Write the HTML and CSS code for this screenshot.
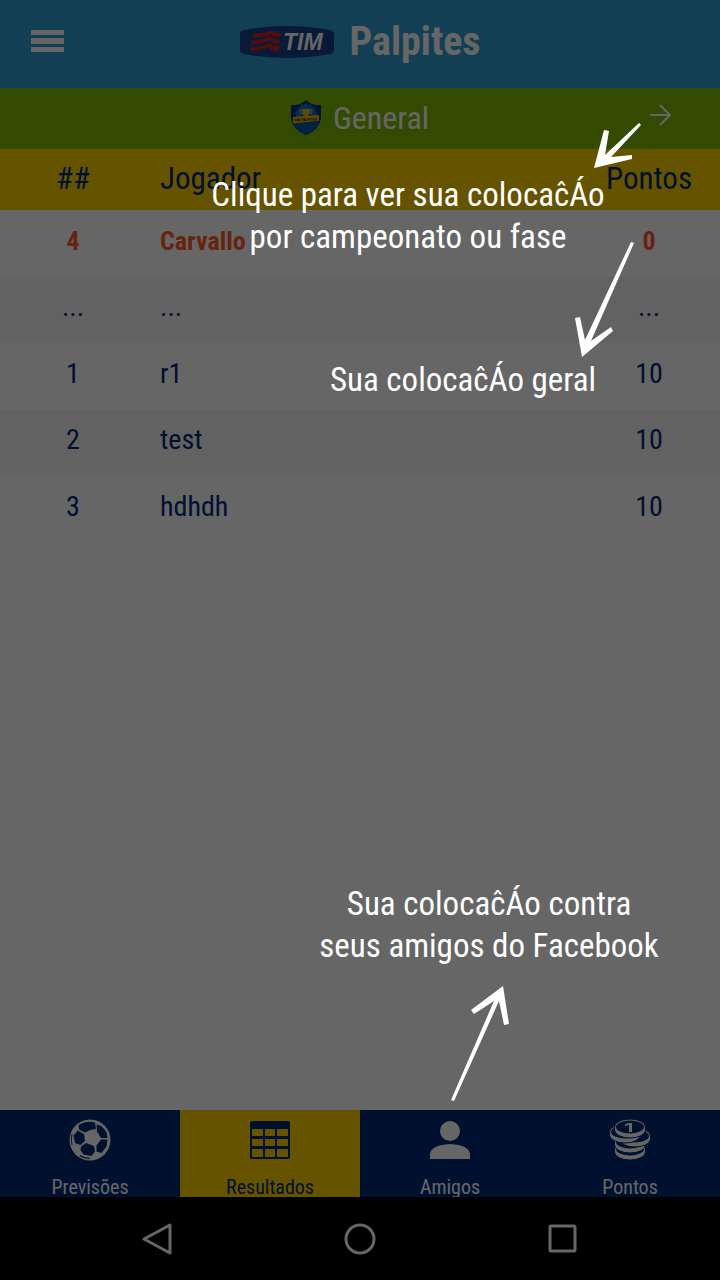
FILE: index.html
```html
<!DOCTYPE html>
<html lang="pt-BR">
<head>
<meta charset="utf-8">
<meta name="viewport" content="width=device-width, initial-scale=1">
<title>TIM Palpites</title>
<link rel="stylesheet" href="styles.css">
</head>
<body>
<div class="screen">
  <header class="topbar">
    <button class="menu-button" type="button" aria-label="Menu">
      <svg width="33" height="24" viewBox="0 0 33 24"><path fill="#fff" d="M0 0h33v5H0zM0 8h33v6H0zM0 17h33v5H0z"/></svg>
    </button>
    <div class="brand">
      <svg class="brand-logo" width="94" height="32" viewBox="0 0 94 32" role="img" aria-label="TIM">
        <path fill="#14438c" d="M0 8Q0 5 4 4Q47-4 90 4Q94 5 94 8V24Q94 27 90 28Q47 36 4 28Q0 27 0 24Z"/>
        <g fill="#d9201c">
          <path d="M14 7q10 1 18-3q3 3 10 3l-2 4q-7 0-9-3q-8 4-18 3z"/>
          <path d="M12 14q10 1 18-4q3 3 10 4l-1 4q-7 0-9-4q-8 5-19 4z"/>
          <path d="M11 21q10 1 18-4q3 3 11 3l-2 5q-7 0-10-4q-7 4-18 4z"/>
        </g>
        <text class="logo-text" x="43" y="24">TIM</text>
      </svg>
      <h1 class="brand-title">Palpites</h1>
    </div>
  </header>

  <div class="phase">
    <div class="phase-name">
      <svg width="30" height="35" viewBox="0 0 30 35" role="img" aria-label="TIM Palpites">
        <path fill="#003078" d="M15 0Q21 6 30 5V18Q29 29 15 35Q1 29 0 18V5Q9 6 15 0Z"/>
        <path fill="#0058a8" d="M2 22h26Q26 30 15 34Q4 30 2 22Z"/>
        <path fill="#0872c4" d="m15 3 2 2 3-1 1 3 3 1v3l2 2-1 3 1 3H4l1-3-1-3 2-2V8l3-1 1-3 3 1z"/>
        <path fill="#e9b620" d="M11 9h8q0 5-3 7v2h-2v-2q-3-2-3-7z"/>
        <path fill="none" stroke="#e9b620" d="M11 10H9q0 4 3 4M19 10h2q0 4-3 4"/>
        <path fill="#efb900" d="m2 17 26-2v6L5 23l-1 1-1-1H2z"/>
        <text class="shield-text" x="3" y="21" transform="rotate(-3 15 20)">TIM PALPITES</text>
      </svg>
      <span>General</span>
    </div>
    <button class="phase-next" type="button" aria-label="Próximo">
      <svg width="24" height="24" viewBox="0 0 24 24"><path fill="none" stroke="#fff" stroke-width="2" d="M1 12h20M11 2l10 10-10 10"/></svg>
    </button>
  </div>

  <main class="content">
    <table class="ranking">
      <thead><tr><th class="pos">##</th><th class="player">Jogador</th><th class="points">Pontos</th></tr></thead>
      <tbody>
        <tr class="me"><td class="pos">4</td><td class="player">Carvallo</td><td class="points">0</td></tr>
        <tr><td class="pos">...</td><td class="player">...</td><td class="points">...</td></tr>
        <tr><td class="pos">1</td><td class="player">r1</td><td class="points">10</td></tr>
        <tr><td class="pos">2</td><td class="player">test</td><td class="points">10</td></tr>
        <tr><td class="pos">3</td><td class="player">hdhdh</td><td class="points">10</td></tr>
      </tbody>
    </table>
  </main>

  <nav class="tabs">
    <a class="tab" href="#previsoes">
      <svg width="42" height="42" viewBox="0 0 42 42">
        <circle cx="21" cy="21" r="20.500" fill="#fff"/>
        <g fill="#002b78">
          <path d="M9.500 6Q18 1 26 3.500L27 10 21 11 16 13.500 10 10.500Z"/>
          <path d="M8.500 11.500 15 15 16 22 11.500 26 6 24 4.500 17Z"/>
          <path d="M12 27.500 17 24 25 27 26 32.500 22.500 37 14.500 35.500 11.500 31Z"/>
          <path d="M32 20.500H38.500L37.500 27.500 32.500 34 27.500 32.500 27.500 26.500Z"/>
          <path d="M27.500 5.500 32.500 7 37.500 13 38.500 19H32L28 12.500Z"/>
          <path d="M2.500 15Q1 20 2.500 26L3.500 26Q2 20 3.500 15Z"/>
          <path d="M11 36Q15 38.500 21 39L21 40Q14 39.500 10.500 37Z"/>
        </g>
      </svg>
      <span>Previsões</span>
    </a>
    <a class="tab active" href="#resultados" aria-current="page">
      <svg width="42" height="42" viewBox="0 0 42 42">
        <path fill="#002b78" fill-rule="evenodd" d="M3 2h36q2 0 2 2v34q0 2-2 2H3q-2 0-2-2V4q0-2 2-2zM3 10v7h11v-7zM16 10v7h10v-7zM28 10v7h11v-7zM3 20v7h11v-7zM16 20v7h10v-7zM28 20v7h11v-7zM3 30v8h11v-8zM16 30v8h10v-8zM28 30v8h11v-8z"/>
      </svg>
      <span>Resultados</span>
    </a>
    <a class="tab" href="#amigos">
      <svg width="42" height="42" viewBox="0 0 42 42"><g fill="#fff"><circle cx="21" cy="12" r="10"/><path d="M1 40v-5q1-9 20-10q19 1 20 10v5z"/></g></svg>
      <span>Amigos</span>
    </a>
    <a class="tab" href="#pontos">
      <svg width="42" height="42" viewBox="0 0 42 42">
        <defs>
          <g id="coin">
            <path fill="#fff" stroke="#002b78" d="M-15.500 0a15.500 8 0 0 1 31 0v3a15.500 8 0 0 1-31 0z"/>
            <ellipse rx="14" ry="6.500" fill="#002b78"/>
          </g>
        </defs>
        <use href="#coin" x="21" y="30"/>
        <use href="#coin" x="21" y="23"/>
        <use href="#coin" x="26" y="17"/>
        <use href="#coin" x="16" y="13"/>
        <use href="#coin" x="21" y="8"/>
        <path fill="#fff" d="M20 4h3v9h-3V6l-4 1V5z"/>
      </svg>
      <span>Pontos</span>
    </a>
  </nav>

  <div class="system-bar">
    <button type="button" aria-label="Voltar"><svg width="34" height="34" viewBox="0 0 34 34"><path d="M30 3v28L4 17z"/></svg></button>
    <button type="button" aria-label="Início"><svg width="34" height="34" viewBox="0 0 34 34"><circle cx="17" cy="17" r="14"/></svg></button>
    <button type="button" aria-label="Recentes"><svg width="34" height="34" viewBox="0 0 34 34"><rect x="4" y="4" width="25" height="25" rx="1"/></svg></button>
  </div>

  <div class="coach">
    <p class="tip tip-phase">Clique para ver sua colocaĉÁo<br>por campeonato ou fase</p>
    <p class="tip tip-overall">Sua colocaĉÁo geral</p>
    <p class="tip tip-friends">Sua colocaĉÁo contra<br>seus amigos do Facebook</p>
    <svg class="arrow arrow-phase" width="48" height="48" viewBox="0 0 48 48"><path d="m46 0 2 2-30 32 21-2v4L1 45 11 7l5 1-4 24z" fill="#fff"/></svg>
    <svg class="arrow arrow-overall" width="60" height="116" viewBox="0 0 60 116"><path d="m56 0 3 1-43 98 20-14 2 4L7 115 0 76l5-1 5 23z" fill="#fff"/></svg>
    <svg class="arrow arrow-friends" width="60" height="116" viewBox="0 0 60 116"><path d="M3 115 0 114 43 15 23 28l-3-4L52 0l6 38-5 1-5-24z" fill="#fff"/></svg>
  </div>
</div>
</body>
</html>
```

FILE: styles.css
```css
* {
  box-sizing: border-box;
}

body {
  margin: 0;
  background: #000;
  font-family: "Roboto Condensed", Roboto, "Liberation Sans Narrow", sans-serif;
  color: #002b78;
}

button {
  border: 0;
  padding: 0;
  background: none;
  display: flex;
}

.screen {
  position: relative;
  display: flex;
  flex-direction: column;
  min-height: 100vh;
  background: #fff;
}

.topbar {
  display: grid;
  grid-template-columns: 1fr auto 1fr;
  align-items: center;
  height: 88px;
  padding: 0 31px 4px;
  background: #2d9dd2;
}

.brand {
  display: flex;
  align-items: center;
  gap: 16px;
}

.logo-text {
  font: italic bold 23px "Liberation Sans", sans-serif;
  fill: #fff;
}

.shield-text {
  font: bold 4px "Roboto Condensed", sans-serif;
  fill: #222;
}

.brand-title {
  margin: 0;
  font-size: 40px;
  line-height: 48px;
  color: #fff;
}

.phase {
  display: grid;
  grid-template-columns: 1fr auto 1fr;
  align-items: center;
  height: 61px;
  padding: 0 47px;
  background: #7dbb00;
}

.phase-name {
  grid-column: 2;
  display: flex;
  align-items: center;
  gap: 12px;
  font-size: 32px;
  line-height: 36px;
  padding-bottom: 2px;
  color: #fff;
}

.phase-next {
  justify-self: end;
  padding-bottom: 8px;
}

.content {
  flex: 1;
}

.ranking {
  width: 100%;
  table-layout: fixed;
  border-collapse: collapse;
  font-size: 28px;
  line-height: 32px;
}

.ranking th,
.ranking td {
  padding: 0;
}

.ranking th {
  height: 61px;
  padding-bottom: 2px;
  background: #ffd000;
  font-size: 31px;
  font-weight: normal;
}

.ranking td {
  height: 67px;
  padding-bottom: 6px;
}

.ranking tbody tr:nth-child(even) {
  background: #f6f6f6;
}

.ranking tbody tr:nth-child(even) td {
  height: 66px;
}

.ranking .pos,
.ranking .points {
  width: 20%;
  padding-left: 2px;
  text-align: center;
}

.ranking .player {
  padding-left: 16px;
  text-align: left;
}

.ranking .me {
  color: #ff5a28;
  font-size: 26px;
  font-weight: bold;
}

.tabs {
  display: grid;
  grid-template-columns: repeat(4, 1fr);
  height: 87px;
  background: #002b78;
}

.tab {
  display: flex;
  flex-direction: column;
  align-items: center;
  gap: 14px;
  padding-top: 9px;
  overflow: hidden;
  color: #fff;
  font-size: 20px;
  line-height: 24px;
  text-decoration: none;
}

.tab svg {
  flex: none;
}

.tab.active {
  background: #ffd000;
  color: #002b78;
}

.system-bar {
  display: flex;
  justify-content: space-between;
  align-items: center;
  height: 83px;
  padding: 0 140px;
  background: #000;
}

.system-bar svg {
  fill: none;
  stroke: #fff;
  stroke-width: 3;
  stroke-linejoin: round;
}

.coach {
  position: absolute;
  inset: 0;
  background: rgba(0, 0, 0, 0.6);
}

.tip {
  position: absolute;
  margin: 0;
  transform: translateX(-50%);
  color: #fff;
  font-size: 33px;
  line-height: 42px;
  text-align: center;
  white-space: nowrap;
}

.tip-phase {
  left: 408px;
  top: 174px;
}

.tip-overall {
  left: 463px;
  top: 359px;
}

.tip-friends {
  left: 489px;
  top: 883px;
}

.arrow {
  position: absolute;
}

.arrow-phase {
  left: 593px;
  top: 123px;
}

.arrow-overall {
  left: 575px;
  top: 242px;
}

.arrow-friends {
  left: 451px;
  top: 986px;
}
```
